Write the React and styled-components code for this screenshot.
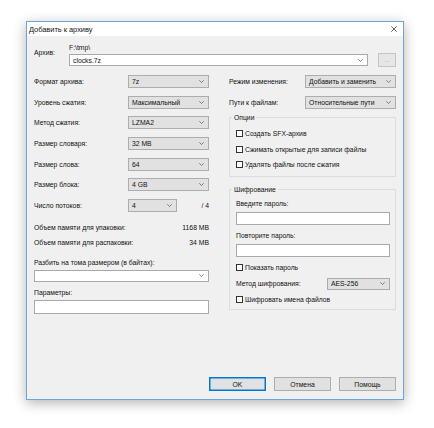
import React from "react";
import styled, { createGlobalStyle } from "styled-components";

const GlobalStyle = createGlobalStyle`
  html, body { margin: 0; padding: 0; background: #fff; }
  body {
    font-family: "Liberation Sans", Arial, sans-serif;
    font-size: 6.8px;
    color: #111;
  }
  * { box-sizing: border-box; }
`;

const Desktop = styled.div`
  width: 434px;
  height: 428px;
  overflow: hidden;
  padding: 21px 0 0 26px;
`;

const Window = styled.div`
  width: 378px;
  height: 379px;
  border: 1px solid #6aa6dc;
  background: #f0f0f0;
  box-shadow: 0 3px 12px rgba(0, 0, 0, 0.3);
  display: flex;
  flex-direction: column;
`;

const TitleBar = styled.div`
  height: 14px;
  background: #fff;
  display: flex;
  align-items: center;
  justify-content: space-between;
  padding: 0 6px 0 2px;
`;

const Title = styled.span`
  font-size: 7.4px;
`;

const Body = styled.div`
  flex: 1;
  display: flex;
  flex-direction: column;
  padding: 7px 7px 8px 7px;
`;

const ArchiveRow = styled.div`
  display: flex;
  align-items: flex-start;
`;

const ArchiveLabel = styled.div`
  width: 35px;
  margin-top: 5px;
  line-height: 10px;
`;

const ArchiveFields = styled.div`
  width: 299px;
  display: flex;
  flex-direction: column;
`;

const PathText = styled.div`
  line-height: 10px;
  height: 10px;
  margin-bottom: 1px;
`;

const BrowseButton = styled.div`
  width: 18px;
  height: 14px;
  margin: 10px 0 0 10px;
  border: 1px solid #c4c4c4;
  background: #e6e6e6;
  color: #9a9a9a;
  display: flex;
  align-items: center;
  justify-content: center;
  font-size: 6px;
`;

const Columns = styled.div`
  display: grid;
  grid-template-columns: 175px 167px;
  column-gap: 20px;
  margin-top: 8px;
`;

const Column = styled.div`
  display: flex;
  flex-direction: column;
`;

const FieldGrid = styled.div`
  display: grid;
  grid-template-columns: ${(p) => p.$label}px 1fr;
  grid-auto-rows: 13px;
  row-gap: 7.67px;
  align-items: center;
`;

const Box = styled.div`
  height: ${(p) => p.$h || 13}px;
  width: ${(p) => (p.$w ? `${p.$w}px` : "100%")};
  border: 1px solid ${(p) => (p.$white ? "#a9a9a9" : "#adadad")};
  background: ${(p) => (p.$white ? "#fff" : "#e1e1e1")};
  display: flex;
  align-items: center;
  justify-content: space-between;
  padding: 0 4px 0 3px;
  white-space: nowrap;
  overflow: hidden;
`;

const ThreadsCell = styled.div`
  display: flex;
  align-items: center;
  justify-content: space-between;
`;

const MemoBlock = styled.div`
  margin-top: 11px;
  display: flex;
  flex-direction: column;
  gap: 5px;
`;

const MemoRow = styled.div`
  display: flex;
  justify-content: space-between;
  line-height: 10px;
  height: 10px;
`;

const Stacked = styled.div`
  margin-top: ${(p) => p.$top}px;
  display: flex;
  flex-direction: column;
`;

const Caption = styled.div`
  line-height: 10px;
  height: 10px;
  margin-bottom: ${(p) => p.$after ?? 2}px;
`;

const Group = styled.fieldset`
  margin: ${(p) => p.$top}px 0 0 0;
  padding: ${(p) => p.$pt}px 5px ${(p) => p.$pb}px 6px;
  border: 1px solid #dcdcdc;
  display: flex;
  flex-direction: column;
  min-width: 0;
`;

const Legend = styled.legend`
  padding: 0 2px;
  margin-left: -4px;
  line-height: 10px;
`;

const CheckRow = styled.label`
  display: flex;
  align-items: center;
  height: 10px;
  margin-top: ${(p) => p.$top || 0}px;
  white-space: nowrap;
`;

const CheckBox = styled.span`
  width: 7px;
  height: 7px;
  border: 1px solid #333;
  background: #fff;
  margin-right: 2px;
  flex: none;
`;

const MethodRow = styled.div`
  margin-top: 5px;
  display: flex;
  align-items: center;
  justify-content: space-between;
`;

const ButtonRow = styled.div`
  margin-top: auto;
  display: flex;
  justify-content: flex-end;
  gap: 8px;
`;

const Button = styled.div`
  width: 57px;
  height: 14px;
  border: 1px solid ${(p) => (p.$default ? "#0078d7" : "#adadad")};
  box-shadow: ${(p) => (p.$default ? "inset 0 0 0 0.5px #0078d7" : "none")};
  background: #e1e1e1;
  display: flex;
  align-items: center;
  justify-content: center;
`;

const Chevron = () => (
  <svg width="5" height="3" viewBox="0 0 5 3" style={{ flex: "none" }}>
    <path d="M0.3 0.3 L2.5 2.5 L4.7 0.3" fill="none" stroke="#555" strokeWidth="0.7" />
  </svg>
);

const CloseIcon = () => (
  <svg width="6" height="6" viewBox="0 0 6 6">
    <path d="M0.3 0.3 L5.7 5.7 M5.7 0.3 L0.3 5.7" stroke="#222" strokeWidth="0.7" />
  </svg>
);

const Select = ({ value, w, h, white }) => (
  <Box $w={w} $h={h} $white={white}>
    <span>{value}</span>
    <Chevron />
  </Box>
);

const Check = ({ text, top }) => (
  <CheckRow $top={top}>
    <CheckBox />
    {text}
  </CheckRow>
);

const leftFields = [
  ["Формат архива:", "7z"],
  ["Уровень сжатия:", "Максимальный"],
  ["Метод сжатия:", "LZMA2"],
  ["Размер словаря:", "32 MB"],
  ["Размер слова:", "64"],
  ["Размер блока:", "4 GB"],
];

export default function App() {
  return (
    <>
      <GlobalStyle />
      <Desktop>
        <Window>
          <TitleBar>
            <Title>Добавить к архиву</Title>
            <CloseIcon />
          </TitleBar>
          <Body>
            <ArchiveRow>
              <ArchiveLabel>Архив:</ArchiveLabel>
              <ArchiveFields>
                <PathText>F:\tmp\</PathText>
                <Select value="clocks.7z" h={12} white />
              </ArchiveFields>
              <BrowseButton>...</BrowseButton>
            </ArchiveRow>

            <Columns>
              <Column>
                <FieldGrid $label={94}>
                  {leftFields.map(([label, value]) => (
                    <React.Fragment key={label}>
                      <span>{label}</span>
                      <Select value={value} />
                    </React.Fragment>
                  ))}
                  <span>Число потоков:</span>
                  <ThreadsCell>
                    <Select value="4" w={49} />
                    <span>/ 4</span>
                  </ThreadsCell>
                </FieldGrid>

                <MemoBlock>
                  <MemoRow>
                    <span>Объем памяти для упаковки:</span>
                    <span>1168 MB</span>
                  </MemoRow>
                  <MemoRow>
                    <span>Объем памяти для распаковки:</span>
                    <span>34 MB</span>
                  </MemoRow>
                </MemoBlock>

                <Stacked $top={10}>
                  <Caption>Разбить на тома размером (в байтах):</Caption>
                  <Select value="" h={12} white />
                </Stacked>

                <Stacked $top={6}>
                  <Caption>Параметры:</Caption>
                  <Box $h={14} $white />
                </Stacked>
              </Column>

              <Column>
                <FieldGrid $label={76}>
                  <span>Режим изменения:</span>
                  <Select value="Добавить и заменить" />
                  <span>Пути к файлам:</span>
                  <Select value="Относительные пути" />
                </FieldGrid>

                <Group $top={4} $pt={6} $pb={6}>
                  <Legend>Опции</Legend>
                  <Check text="Создать SFX-архив" />
                  <Check text="Сжимать открытые для записи файлы" top={5.5} />
                  <Check text="Удалять файлы после сжатия" top={5.5} />
                </Group>

                <Group $top={8} $pt={4} $pb={4}>
                  <Legend>Шифрование</Legend>
                  <Caption $after={3}>Введите пароль:</Caption>
                  <Box $white />
                  <Stacked $top={6}>
                    <Caption $after={3}>Повторите пароль:</Caption>
                    <Box $white />
                  </Stacked>
                  <Check text="Показать пароль" top={6} />
                  <MethodRow>
                    <span>Метод шифрования:</span>
                    <Select value="AES-256" w={63} h={12} />
                  </MethodRow>
                  <Check text="Шифровать имена файлов" top={5} />
                </Group>
              </Column>
            </Columns>

            <ButtonRow>
              <Button $default>OK</Button>
              <Button>Отмена</Button>
              <Button>Помощь</Button>
            </ButtonRow>
          </Body>
        </Window>
      </Desktop>
    </>
  );
}
